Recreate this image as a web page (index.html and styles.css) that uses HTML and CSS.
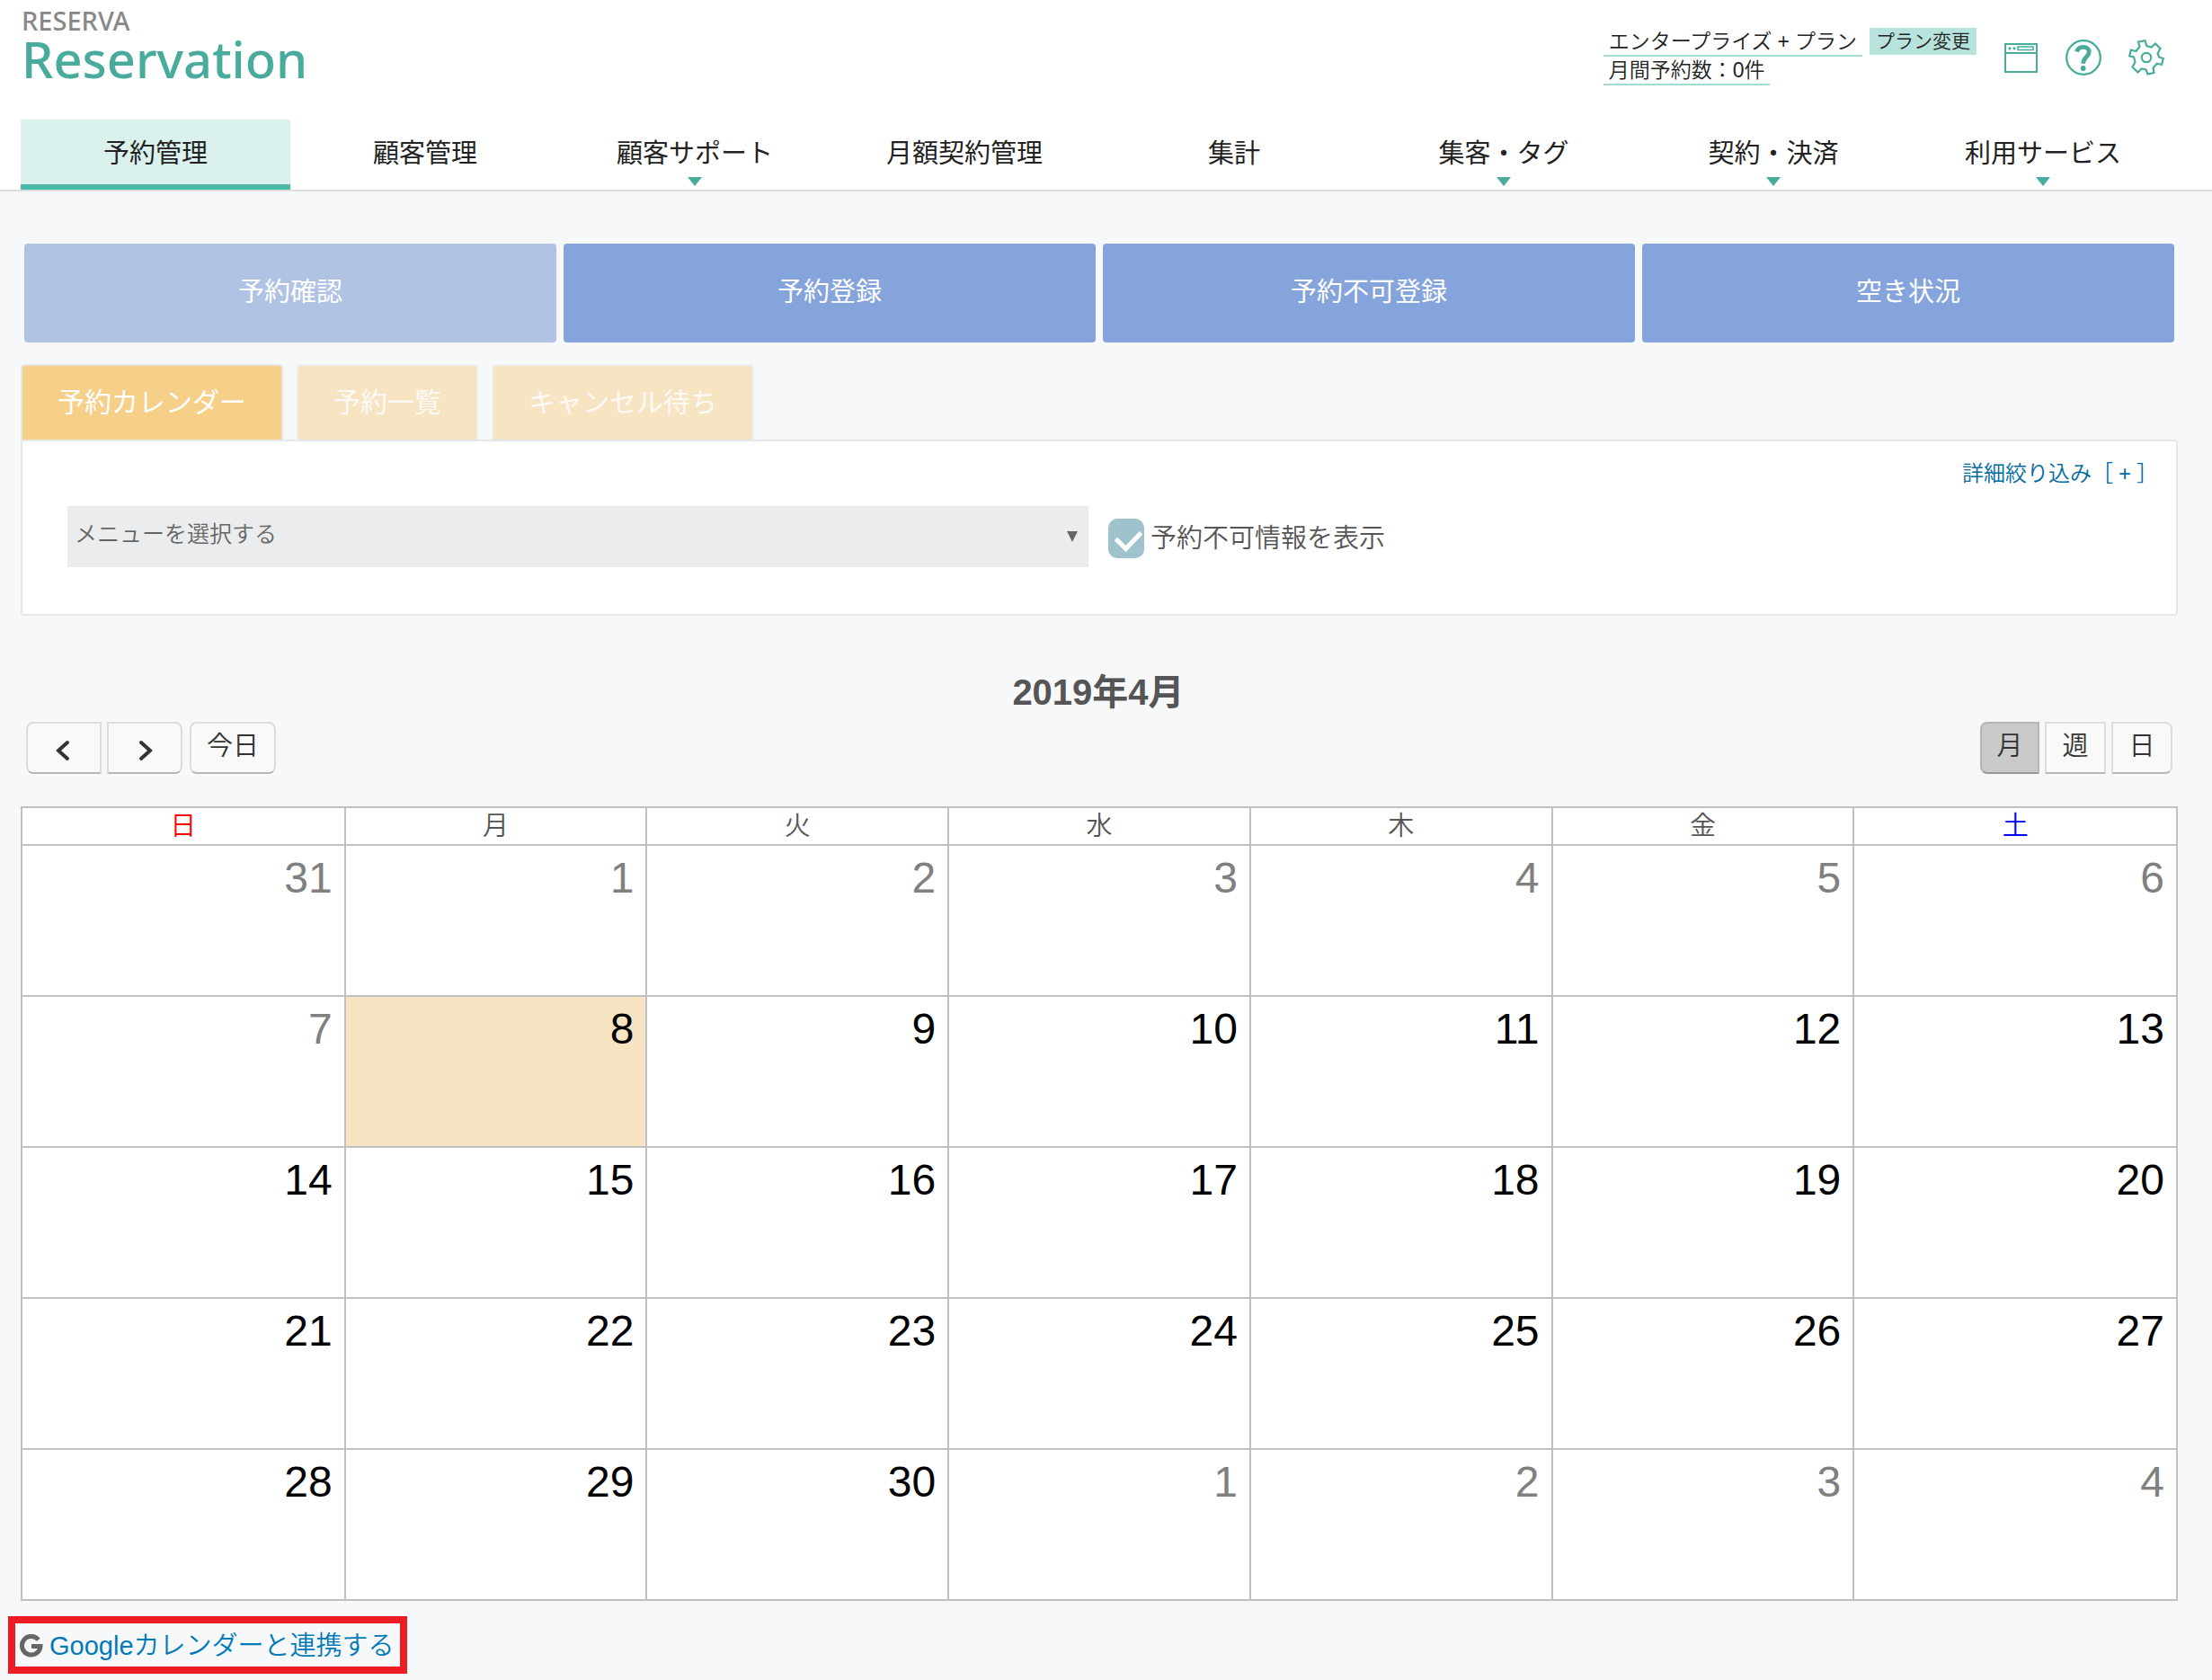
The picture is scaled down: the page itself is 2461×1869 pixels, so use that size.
FILE: index.html
```html
<!DOCTYPE html>
<html lang="ja">
<head>
<meta charset="utf-8">
<meta name="viewport" content="width=device-width, initial-scale=1">
<title>予約カレンダー | RESERVA Reservation</title>
<link rel="stylesheet" href="styles.css">
</head>
<body>
<header class="header">
  <div class="header-top">
    <a class="logo" href="#">
      <span class="logo-brand">RESERVA</span>
      <span class="logo-product">Reservation</span>
    </a>
    <div class="account">
      <div class="plan">
        <div class="plan-row">
          <span class="plan-text">エンタープライズ<span class="plus">+</span>プラン</span>
          <a class="plan-change" href="#">プラン変更</a>
        </div>
        <div class="plan-row"><span class="plan-text">月間予約数：0件</span></div>
      </div>
      <div class="tools">
        <a class="tool" href="#" aria-label="サイト表示">
          <svg width="40" height="40" viewBox="0 0 40 40" fill="none" stroke="currentColor" stroke-width="2"><rect x="3" y="5" width="35" height="31"/><path d="M3 15H38"/><rect x="17" y="8" width="17" height="3.500" stroke-width="1.500"/><circle cx="8" cy="9.800" r="1.600" fill="currentColor" stroke="none"/><circle cx="13" cy="9.800" r="1.600" fill="currentColor" stroke="none"/></svg>
        </a>
        <a class="tool" href="#" aria-label="ヘルプ">
          <svg width="40" height="40" viewBox="0 0 40 40" fill="none" stroke="currentColor"><circle cx="20" cy="20" r="18.800" stroke-width="2.300"/><path d="M12.500 13.500C13.500 9.800 16 8.300 19.800 8.300C23.800 8.300 26.200 10.500 26.200 13.800C26.200 18.800 19.700 20 19.700 26.800" stroke-width="4.800"/><circle cx="19.700" cy="32" r="2.900" fill="currentColor" stroke="none"/></svg>
        </a>
        <a class="tool" href="#" aria-label="設定">
          <svg width="40" height="40" viewBox="0 0 40 40" fill="none" stroke="currentColor" stroke-width="2.200"><path d="M11 2.500L18.500 1.200 20.300 7 25.500 8.500 30 4.500 35.500 10 32.500 15.500 34.200 19.700 38.800 21 37 27.800 31.500 27 27.500 31.500 28.500 37 21.500 38.500 19.500 33.500 14.500 32.500 10.500 36.500 4.500 30.500 7.500 25 6 19.500 1.200 18.500 2.800 11.500 8.500 13 12.500 8Z"/><circle cx="20" cy="20" r="5.200"/></svg>
        </a>
      </div>
    </div>
  </div>
  <nav class="nav">
    <a class="nav-item is-active" href="#">予約管理</a>
    <a class="nav-item" href="#">顧客管理</a>
    <a class="nav-item has-menu" href="#">顧客サポート</a>
    <a class="nav-item" href="#">月額契約管理</a>
    <a class="nav-item" href="#">集計</a>
    <a class="nav-item has-menu" href="#">集客・タグ</a>
    <a class="nav-item has-menu" href="#">契約・決済</a>
    <a class="nav-item has-menu" href="#">利用サービス</a>
  </nav>
</header>

<main class="main">
  <div class="actions">
    <a class="action is-current" href="#">予約確認</a>
    <a class="action" href="#">予約登録</a>
    <a class="action" href="#">予約不可登録</a>
    <a class="action" href="#">空き状況</a>
  </div>

  <div class="tabs">
    <a class="tab is-active" href="#">予約カレンダー</a>
    <a class="tab" href="#">予約一覧</a>
    <a class="tab" href="#">キャンセル待ち</a>
  </div>

  <section class="panel">
    <a class="panel-link" href="#">詳細絞り込み［<span class="plus">+</span>］</a>
    <div class="filters">
      <div class="select-wrap">
        <select class="select" aria-label="メニュー"><option>メニューを選択する</option></select>
      </div>
      <label class="check" for="blocked"><input class="check-box" type="checkbox" id="blocked" checked>予約不可情報を表示</label>
    </div>
  </section>

  <section class="calendar">
    <h2 class="calendar-title">2019年4月</h2>
    <div class="toolbar">
      <div class="toolbar-left">
        <div class="group">
          <button class="btn btn-arrow" type="button" aria-label="前の月"><svg width="18" height="24" viewBox="0 0 18 24" fill="none" stroke="currentColor" stroke-width="4" stroke-linecap="round"><path d="M13 3L3 12 13 21"/></svg></button>
          <button class="btn btn-arrow" type="button" aria-label="次の月"><svg width="18" height="24" viewBox="0 0 18 24" fill="none" stroke="currentColor" stroke-width="4" stroke-linecap="round"><path d="M5 3L15 12 5 21"/></svg></button>
        </div>
        <div class="group"><button class="btn" type="button">今日</button></div>
      </div>
      <div class="group">
        <button class="btn btn-view is-pressed" type="button">月</button>
        <button class="btn btn-view" type="button">週</button>
        <button class="btn btn-view" type="button">日</button>
      </div>
    </div>
    <table class="month">
      <colgroup><col class="col-end"><col><col><col><col><col><col class="col-end"></colgroup>
      <thead>
        <tr><th class="sun">日</th><th>月</th><th>火</th><th>水</th><th>木</th><th>金</th><th class="sat">土</th></tr>
      </thead>
      <tbody>
        <tr><td class="dim">31</td><td class="dim">1</td><td class="dim">2</td><td class="dim">3</td><td class="dim">4</td><td class="dim">5</td><td class="dim">6</td></tr>
        <tr><td class="dim">7</td><td class="today">8</td><td>9</td><td>10</td><td>11</td><td>12</td><td>13</td></tr>
        <tr><td>14</td><td>15</td><td>16</td><td>17</td><td>18</td><td>19</td><td>20</td></tr>
        <tr><td>21</td><td>22</td><td>23</td><td>24</td><td>25</td><td>26</td><td>27</td></tr>
        <tr><td>28</td><td>29</td><td>30</td><td class="dim">1</td><td class="dim">2</td><td class="dim">3</td><td class="dim">4</td></tr>
      </tbody>
    </table>
  </section>
</main>

<footer class="footer">
  <a class="google" href="#">
    <svg class="google-mark" width="26" height="26" viewBox="0 0 26 26" fill="none" stroke="currentColor" stroke-width="5"><path d="M20.800 6.300A10.300 10.300 0 1 0 23 13.500H13"/></svg>
    Googleカレンダーと連携する
  </a>
</footer>
</body>
</html>
```

FILE: styles.css
```css
:root {
  --teal: #48ab9b;
  --line: #e4e8eb;
  --grid: #c0c0c0;
}

* { box-sizing: border-box; }

body {
  margin: 0;
  background: #f7f8fa;
  color: #222;
  font-family: "Liberation Sans", "Noto Sans CJK JP", sans-serif;
  font-size: 29px;
  font-weight: 350;
  line-height: 40px;
}

a { color: inherit; text-decoration: none; }

button, select, input { font: inherit; }

.plus { padding: 0 6px; }

/* Header */
.header {
  background: #fff;
  border-bottom: 2px solid #ddd;
}

.header-top {
  display: flex;
  justify-content: space-between;
  height: 133px;
  padding: 7px 53px 0 24px;
}

.logo {
  display: flex;
  flex-direction: column;
  font-family: "Noto Sans", sans-serif;
  font-weight: 500;
}

.logo-brand {
  color: #888;
  font-size: 29px;
  line-height: 32px;
}

.logo-product {
  color: var(--teal);
  font-size: 56px;
  line-height: 52px;
}

.account {
  display: flex;
  align-items: flex-start;
  gap: 29px;
  padding-top: 24px;
}

.plan {
  font-size: 23px;
  line-height: 30px;
}

.plan-row {
  display: flex;
  gap: 8px;
}

.plan-text {
  padding: 0 6px;
  border-bottom: 2px solid #a3dbd2;
}

.plan-change {
  height: 30px;
  padding: 0 7px;
  background: #b8e2dc;
  font-size: 21px;
}

.tools {
  display: flex;
  gap: 30px;
  padding-top: 13px;
  color: var(--teal);
}

.tool svg { display: block; }

.nav {
  display: flex;
  padding: 0 38px 0 23px;
}

.nav-item {
  position: relative;
  flex: 1;
  height: 78px;
  padding-top: 18px;
  font-weight: 400;
  text-align: center;
}

.nav-item.is-active {
  background: #daf1ed;
  border-bottom: 6px solid #4bb9a7;
}

.has-menu::after {
  content: "";
  position: absolute;
  bottom: 4px;
  left: 50%;
  margin-left: -8px;
  border: 8px solid transparent;
  border-top: 10px solid var(--teal);
  border-bottom: 0;
}

/* Main */
.main { padding: 58px 38px 0 23px; }

.actions {
  display: grid;
  grid-template-columns: repeat(4, 1fr);
  gap: 8px;
  padding: 0 4px;
}

.action {
  padding: 34px 0 36px;
  border-radius: 4px;
  background: #86a4dc;
  color: #fff;
  font-weight: 400;
  text-align: center;
}

.action.is-current { background: #b0c3e4; }

.tabs {
  display: flex;
  gap: 15px;
  margin-top: 24px;
}

.tab {
  padding: 21px 39px;
  border: 2px solid var(--line);
  border-bottom: 0;
  border-radius: 4px 4px 0 0;
  background: #f6cf89;
  color: #fff;
  font-size: 30px;
  font-weight: 400;
}

.tab:not(.is-active) {
  border-color: #eeeff0;
  background: #f7e4c3;
  color: #fdfaf5;
}

.panel {
  display: flex;
  flex-direction: column;
  padding: 16px 20px 52px 50px;
  border: 2px solid var(--line);
  border-radius: 0 4px 4px 4px;
  background: #fff;
}

.panel-link {
  align-self: flex-end;
  color: #006a9f;
  font-size: 24px;
}

.filters {
  display: flex;
  align-items: center;
  gap: 22px;
  margin-top: 16px;
}

.select-wrap {
  position: relative;
  width: calc(50% - 27px);
}

.select {
  display: block;
  width: 100%;
  height: 68px;
  padding: 0 40px 6px 8px;
  border: 0;
  border-radius: 0;
  background: #ebecee;
  color: #666;
  font-size: 25px;
  appearance: none;
}

.select-wrap::after {
  content: "";
  position: absolute;
  top: 28px;
  right: 12px;
  border: 6px solid transparent;
  border-top: 12px solid #666;
  border-bottom: 0;
  pointer-events: none;
}

.check {
  display: flex;
  align-items: center;
  gap: 7px;
  padding-top: 4px;
  color: #555;
}

.check-box {
  position: relative;
  width: 40px;
  height: 44px;
  margin: 0;
  border-radius: 10px;
  background: #9fc3cc;
  appearance: none;
}

.check-box:checked::after {
  content: "";
  position: absolute;
  top: 12px;
  left: 9px;
  width: 22px;
  height: 13px;
  border: solid #fff;
  border-width: 0 0 5px 5px;
  transform: rotate(-46deg);
}

/* Calendar */
.calendar-title {
  margin: 65px 0 13px;
  padding-right: 2px;
  color: #555;
  font-size: 40px;
  line-height: 40px;
  text-align: center;
}

.toolbar {
  display: flex;
  justify-content: space-between;
  padding: 0 6px;
}

.toolbar-left {
  display: flex;
  gap: 8px;
}

.group {
  display: flex;
  gap: 6px;
}

.btn {
  height: 58px;
  padding: 0 17px 4px;
  border: 2px solid #ddd;
  border-bottom-color: #b8b8b8;
  background: #f9f9f9;
  color: #333;
}

.btn:first-child {
  border-top-left-radius: 8px;
  border-bottom-left-radius: 8px;
}

.btn:last-child {
  border-top-right-radius: 8px;
  border-bottom-right-radius: 8px;
}

.btn-arrow {
  display: flex;
  align-items: center;
  justify-content: center;
  width: 84px;
  padding: 5px 0 0;
}

.btn-view {
  width: 68px;
  padding: 0 0 4px;
}

.btn.is-pressed {
  width: 66px;
  border-color: #b5b5b5;
  border-bottom-color: #999;
  background: #cacaca;
}

.month {
  width: 100%;
  margin-top: 36px;
  border-collapse: collapse;
  table-layout: fixed;
  background: #fff;
}

.col-end { width: 15%; }

.month th,
.month td {
  border: 2px solid var(--grid);
}

.month th {
  padding: 0;
  color: #555;
  font-weight: 350;
}

.month .sun { color: #f00; }
.month .sat { color: #00f; }

.month td {
  height: 168px;
  padding: 8px 13px;
  color: #000;
  font-size: 48px;
  line-height: 56px;
  text-align: right;
  vertical-align: top;
}

.month .dim { color: #808080; }
.month .today { background: #f7e4c3; }

.footer { padding: 17px 9px 7px; }

.google {
  display: inline-flex;
  align-items: center;
  gap: 7px;
  height: 64px;
  padding: 1px 6px 0 5px;
  border: 8px solid #ed1c24;
  color: #007ab8;
}

.google-mark { color: #666; }
```
